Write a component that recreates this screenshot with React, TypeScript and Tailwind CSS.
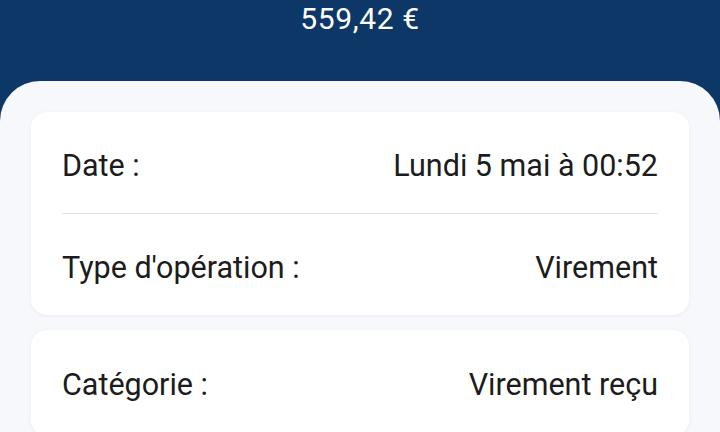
export default function App() {
  const font = { fontFamily: 'Roboto, "Noto Sans", sans-serif' };
  return (
    <div className="w-[720px] h-[432px] overflow-hidden bg-[#0d3766]" style={font}>
      <div className="h-[81px] flex justify-center">
        <div className="text-white text-[30px] leading-none pt-[4px] tracking-[0.6px]">559,42 €</div>
      </div>
      <div className="bg-[#f6f8fc] rounded-t-[40px] h-[351px] px-[31px] pt-[31px] flex flex-col gap-[15px]">
        <div className="bg-white rounded-[16px] shadow-[0_1px_4px_rgba(0,0,0,0.05)] px-[31px] text-[#1c1c1c] text-[30.5px]">
          <div className="h-[102px] pt-[6px] flex items-center justify-between border-b border-[#e2e2e2]">
            <span>Date :</span>
            <span>Lundi 5 mai à 00:52</span>
          </div>
          <div className="h-[101px] pt-[6px] flex items-center justify-between">
            <span>Type d'opération :</span>
            <span>Virement</span>
          </div>
        </div>
        <div className="bg-white rounded-[16px] shadow-[0_1px_4px_rgba(0,0,0,0.05)] px-[31px] text-[#1c1c1c] text-[30.5px]">
          <div className="h-[106px] pt-[3px] flex items-center justify-between">
            <span>Catégorie :</span>
            <span>Virement reçu</span>
          </div>
        </div>
      </div>
    </div>
  );
}
